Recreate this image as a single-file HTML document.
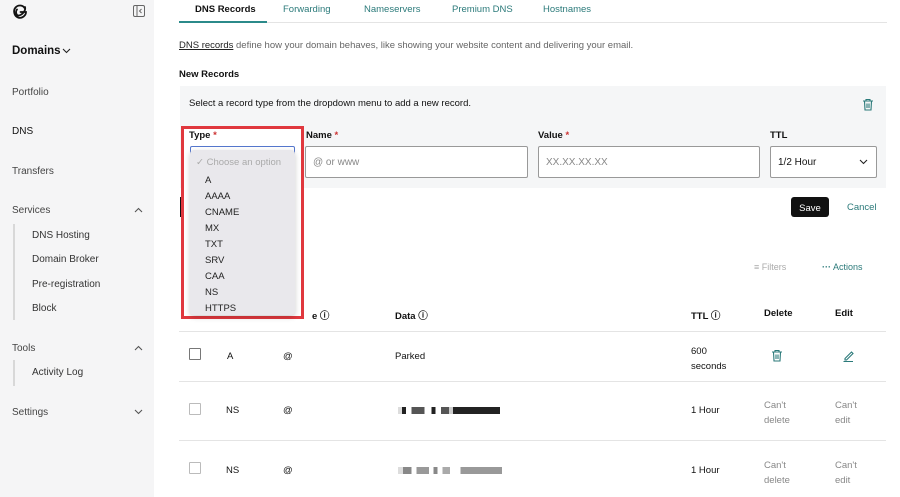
<!DOCTYPE html>
<html><head><meta charset="utf-8"><style>
*{box-sizing:border-box;margin:0;padding:0}
body{width:900px;height:497px;overflow:hidden;background:#fff;font-family:"Liberation Sans",sans-serif;color:#111;position:relative;font-size:10px}
.a{position:absolute;white-space:nowrap}
.side{position:absolute;left:0;top:0;width:154px;height:497px;background:#f5f5f6}
.sg{color:#444;font-size:10px}
.sub{color:#333;font-size:10px}
.vl{position:absolute;width:2px;background:#d8d8d8}
.teal{color:#2b7a7a}
.inp{position:absolute;height:32px;border:1px solid #999;background:#fff;border-radius:2px;font-size:10px;color:#888;padding:10px 7px}
.hl{position:absolute;height:1px;background:#e4e4e4}
.cb{position:absolute;width:12px;height:12px;border:1.5px solid #777;border-radius:1px}
.gray{color:#888}
.blk{position:absolute;height:7px}
.chev{position:absolute}
</style></head><body>
<div class="side"></div>
<svg class="a" style="left:12px;top:3px" width="17" height="17" viewBox="0 0 17 17"><path d="M12.5 5 C11 2 6 1.5 3.5 4.5 C1 7.5 2 13 6 14.5 C10 16 14 12.5 14 9 L8.5 9 M5 6.5 C3 9 4.5 13 7 12.5 C11 11.5 14 7 13 4" fill="none" stroke="#111" stroke-width="1.8" stroke-linecap="round"/></svg>
<svg class="a" style="left:133px;top:5px" width="12" height="12" viewBox="0 0 12 12"><rect x="0.5" y="0.5" width="11" height="11" rx="1.5" fill="none" stroke="#666"/><line x1="4" y1="0.5" x2="4" y2="11.5" stroke="#666"/><path d="M8.5 4 L6.5 6 L8.5 8" fill="none" stroke="#666"/></svg>
<div class="a" style="left:12px;top:45px;font-size:11.5px;font-weight:bold">Domains</div>
<svg class="chev" style="left:62px;top:48px" width="9" height="6" viewBox="0 0 9 6"><path d="M1 1 L4.5 4.5 L8 1" fill="none" stroke="#222" stroke-width="1.1"/></svg>
<div class="a sg" style="left:12px;top:87px">Portfolio</div>
<div class="a" style="left:12px;top:126px;font-size:10px;color:#111">DNS</div>
<div class="a sg" style="left:12px;top:166px">Transfers</div>
<div class="a sg" style="left:12px;top:205px">Services</div>
<svg class="chev" style="left:134px;top:207px" width="9" height="6" viewBox="0 0 9 6"><path d="M1 5 L4.5 1.5 L8 5" fill="none" stroke="#555" stroke-width="1.1"/></svg>
<div class="vl" style="left:13px;top:224px;height:96px"></div>
<div class="a sub" style="left:32px;top:230px">DNS Hosting</div>
<div class="a sub" style="left:32px;top:254px">Domain Broker</div>
<div class="a sub" style="left:32px;top:279px">Pre-registration</div>
<div class="a sub" style="left:32px;top:303px">Block</div>
<div class="a sg" style="left:12px;top:343px">Tools</div>
<svg class="chev" style="left:134px;top:345px" width="9" height="6" viewBox="0 0 9 6"><path d="M1 5 L4.5 1.5 L8 5" fill="none" stroke="#555" stroke-width="1.1"/></svg>
<div class="vl" style="left:13px;top:360px;height:26px"></div>
<div class="a sub" style="left:32px;top:367px">Activity Log</div>
<div class="a sg" style="left:12px;top:407px">Settings</div>
<svg class="chev" style="left:134px;top:409px" width="9" height="6" viewBox="0 0 9 6"><path d="M1 1 L4.5 4.5 L8 1" fill="none" stroke="#555" stroke-width="1.1"/></svg>

<div class="a" style="left:195px;top:4px;font-weight:bold;font-size:9.5px">DNS Records</div>
<div class="a teal" style="left:283px;top:4px;font-size:9.5px">Forwarding</div>
<div class="a teal" style="left:364px;top:4px;font-size:9.5px">Nameservers</div>
<div class="a teal" style="left:452px;top:4px;font-size:9.5px">Premium DNS</div>
<div class="a teal" style="left:543px;top:4px;font-size:9.5px">Hostnames</div>
<div class="hl" style="left:179px;top:22px;width:708px"></div>
<div class="a" style="left:179px;top:21px;width:88px;height:2px;background:#2b8a8a"></div>
<div class="a" style="left:179px;top:40px;font-size:9.5px;color:#666"><span style="text-decoration:underline;color:#222">DNS records</span> define how your domain behaves, like showing your website content and delivering your email.</div>
<div class="a" style="left:179px;top:69px;font-weight:bold;font-size:9.5px">New Records</div>
<div class="a" style="left:180px;top:86px;width:706px;height:102px;background:#f5f6f7"></div>
<div class="a" style="left:189px;top:98px;font-size:9.5px">Select a record type from the dropdown menu to add a new record.</div>
<svg class="a" style="left:862px;top:98px" width="12" height="13" viewBox="0 0 12 13"><path d="M1 3 H11 M4 3 V1.5 H8 V3 M2.5 3 L3 12 H9 L9.5 3 M5 5.5 V10 M7 5.5 V10" fill="none" stroke="#2b7a7a" stroke-width="1.1"/></svg>
<div class="a" style="left:306px;top:130px;font-weight:bold;font-size:9.5px">Name <span style="color:#c33">*</span></div>
<div class="a" style="left:538px;top:130px;font-weight:bold;font-size:9.5px">Value <span style="color:#c33">*</span></div>
<div class="a" style="left:770px;top:130px;font-weight:bold;font-size:9.5px">TTL</div>
<div class="inp" style="left:305px;top:146px;width:223px">@ or www</div>
<div class="inp" style="left:538px;top:146px;width:222px">XX.XX.XX.XX</div>
<div class="inp" style="left:770px;top:146px;width:107px;color:#111">1/2 Hour</div>
<svg class="chev" style="left:859px;top:159px" width="9" height="6" viewBox="0 0 9 6"><path d="M1 1 L4.5 4.5 L8 1" fill="none" stroke="#222" stroke-width="1.1"/></svg>

<div class="a" style="left:180px;top:197px;width:10px;height:20px;background:#111"></div>
<div class="a" style="left:791px;top:197px;width:38px;height:20px;background:#111;color:#fff;border-radius:3px;font-size:9.5px;text-align:center;line-height:20px;padding-top:1px"><span style="position:relative;top:1px">Save</span></div>
<div class="a teal" style="left:847px;top:202px;font-size:9.5px">Cancel</div>

<div class="a" style="left:754px;top:262px;font-size:9px;color:#aaa">&#8801; Filters</div>
<div class="a teal" style="left:822px;top:262px;font-size:9px"><b>&middot;&middot;&middot;</b> Actions</div>

<div class="a" style="left:312px;top:308px;font-weight:bold;font-size:9.5px">e &#9432;</div>
<div class="a" style="left:395px;top:308px;font-weight:bold;font-size:9.5px">Data &#9432;</div>
<div class="a" style="left:691px;top:308px;font-weight:bold;font-size:9.5px">TTL &#9432;</div>
<div class="a" style="left:764px;top:308px;font-weight:bold;font-size:9.5px">Delete</div>
<div class="a" style="left:835px;top:308px;font-weight:bold;font-size:9.5px">Edit</div>
<div class="hl" style="left:179px;top:331px;width:707px"></div>
<div class="cb" style="left:189px;top:348px"></div>
<div class="a" style="left:227px;top:351px;font-size:9.5px">A</div>
<div class="a" style="left:283px;top:351px;font-size:9.5px">@</div>
<div class="a" style="left:395px;top:351px;font-size:9.5px">Parked</div>
<div class="a" style="left:691px;top:344px;font-size:9.5px;line-height:15px">600<br>seconds</div>
<svg class="a" style="left:771px;top:349px" width="12" height="13" viewBox="0 0 12 13"><path d="M1 3 H11 M4 3 V1.5 H8 V3 M2.5 3 L3 12 H9 L9.5 3 M5 5.5 V10 M7 5.5 V10" fill="none" stroke="#2b7a7a" stroke-width="1.1"/></svg>
<svg class="a" style="left:842px;top:349px" width="13" height="13" viewBox="0 0 13 13"><path d="M3 9.5 L9.5 3 L11 4.5 L4.5 11 L3 11 Z M1.5 12.5 H11" fill="none" stroke="#2b7a7a" stroke-width="1.1"/></svg>
<div class="hl" style="left:179px;top:381px;width:707px"></div>
<div class="cb" style="left:189px;top:403px;border-color:#bbb"></div>
<div class="a" style="left:226px;top:405px;font-size:9.5px">NS</div>
<div class="a" style="left:283px;top:405px;font-size:9.5px">@</div>
<div class="blk" style="left:398px;top:407px;width:102px;background:linear-gradient(90deg,#ddd 0 4%,#222 4% 8%,#fff 8% 13%,#555 13% 26%,#fff 26% 33%,#222 33% 37%,#fff 37% 42%,#555 42% 50%,#ccc 50% 54%,#222 54% 100%)"></div>
<div class="a" style="left:691px;top:405px;font-size:9.5px">1 Hour</div>
<div class="a gray" style="left:764px;top:398px;font-size:9.5px;line-height:15px">Can't<br>delete</div>
<div class="a gray" style="left:835px;top:398px;font-size:9.5px;line-height:15px">Can't<br>edit</div>
<div class="hl" style="left:179px;top:440px;width:707px"></div>
<div class="cb" style="left:189px;top:462px;border-color:#bbb"></div>
<div class="a" style="left:226px;top:465px;font-size:9.5px">NS</div>
<div class="a" style="left:283px;top:465px;font-size:9.5px">@</div>
<div class="blk" style="left:398px;top:467px;width:104px;background:linear-gradient(90deg,#ddd 0 5%,#888 5% 13%,#fff 13% 18%,#999 18% 30%,#fff 30% 34%,#888 34% 38%,#fff 38% 43%,#aaa 43% 50%,#fff 50% 60%,#999 60% 100%)"></div>
<div class="a" style="left:691px;top:465px;font-size:9.5px">1 Hour</div>
<div class="a gray" style="left:764px;top:458px;font-size:9.5px;line-height:15px">Can't<br>delete</div>
<div class="a gray" style="left:835px;top:458px;font-size:9.5px;line-height:15px">Can't<br>edit</div>

<div class="a" style="left:181px;top:126px;width:123px;height:193px;border:3px solid #e0383e;background:#fff"></div>
<div class="a" style="left:189px;top:130px;font-weight:bold;font-size:9.5px">Type <span style="color:#c33">*</span></div>
<div class="a" style="left:190px;top:146px;width:105px;height:32px;border:1px solid #5577cc;border-radius:2px;background:#fff"></div>
<div class="a" style="left:190px;top:150px;width:105px;height:165px;background:#e9e8ec;box-shadow:0 2px 6px rgba(0,0,0,.2);border-radius:4px"></div>
<div class="a" style="left:196px;top:157px;font-size:9.5px;color:#aaa">&#10003; Choose an option</div>
<div class="a" style="left:205px;top:173px;font-size:9.5px;line-height:16px;color:#222">A<br>AAAA<br>CNAME<br>MX<br>TXT<br>SRV<br>CAA<br>NS<br>HTTPS</div>
</body></html>
